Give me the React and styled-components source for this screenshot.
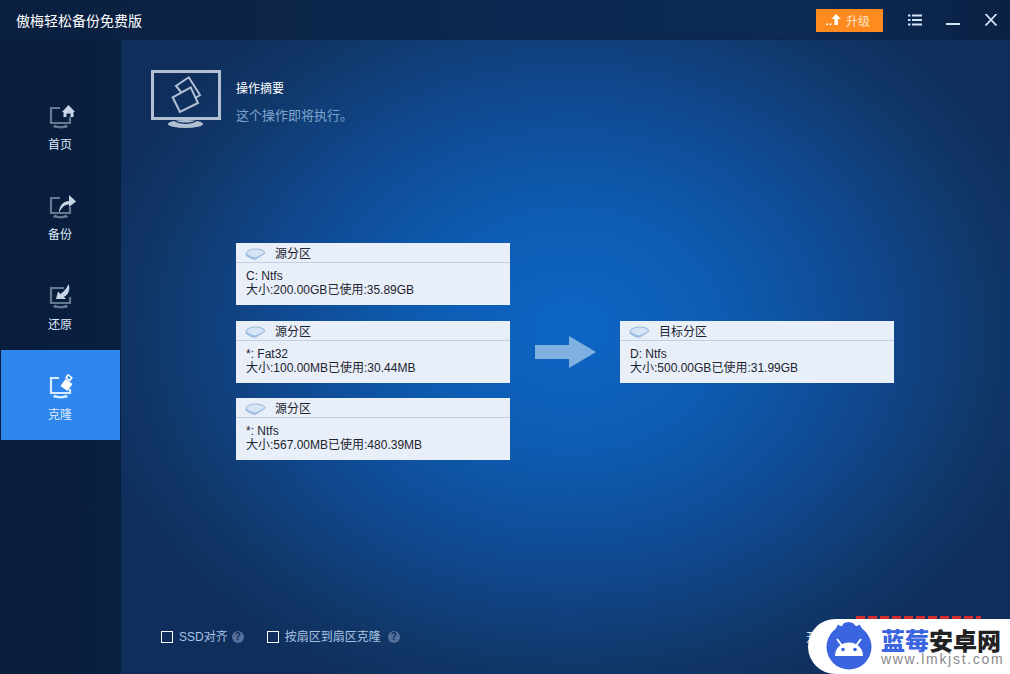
import styled, { createGlobalStyle } from "styled-components"

const cjk = `"Liberation Sans", "Noto Sans CJK SC", sans-serif`

const Monitor = ({ stroke, d }) => (
  <>
    <path d={d} fill="none" stroke={stroke} strokeWidth="2.2" />
    <path d="M6 20.5 C9 22.5 14 22.5 17 20.5 L19 22.5 C19 25 4 25 4 22.5 Z" fill={stroke} />
  </>
)

const HomeIcon = () => (
  <svg width="30" height="28" viewBox="0 0 30 28">
    <Monitor stroke="#66788f" d="M11 4 H2 V19 H21 V13" />
    <path d="M13 8 L19.5 1 L26 8 H24.5 V13 H21.5 V9.5 H17.5 V13 H14.5 V8 Z" fill="#c9d6e8" />
  </svg>
)

const BackupIcon = () => (
  <svg width="30" height="28" viewBox="0 0 30 28">
    <Monitor stroke="#66788f" d="M11 4 H2 V19 H21 V13" />
    <path d="M10 19 C10 11 15 7 20 7 V1 L27 7.5 L20 13 V10.5 C16 10.5 12.5 13 10 19 Z" fill="#c9d6e8" />
  </svg>
)

const RestoreIcon = () => (
  <svg width="30" height="28" viewBox="0 0 30 28">
    <Monitor stroke="#66788f" d="M15 4 H2 V19 H21 V13" />
    <path d="M7 15 L9 7.5 L11.5 10 C15 7.5 18 4 19.5 0 C21.5 5 20 10 15 13 L17 15 Z" fill="#c9d6e8" />
  </svg>
)

const CloneIcon = () => (
  <svg width="30" height="28" viewBox="0 0 30 28">
    <Monitor stroke="#d5ebff" d="M10 4 H2 V19 H21 V15" />
    <path d="M19 0.8 L22.8 3.6 L20.8 6.6 L17 3.8 Z" fill="none" stroke="#fff" strokeWidth="1.5" />
    <path d="M16.5 5 L23.5 10 L18.5 17 L11.5 12 Z" fill="#fff" />
  </svg>
)

const navItems = [
  { label: "首页", Icon: HomeIcon },
  { label: "备份", Icon: BackupIcon },
  { label: "还原", Icon: RestoreIcon },
  { label: "克隆", Icon: CloneIcon, active: true },
]

const sources = [
  { name: "C: Ntfs", size: "大小:200.00GB已使用:35.89GB" },
  { name: "*: Fat32", size: "大小:100.00MB已使用:30.44MB" },
  { name: "*: Ntfs", size: "大小:567.00MB已使用:480.39MB" },
]

const DriveIcon = () => (
  <svg width="21" height="13" viewBox="0 0 21 13">
    <path d="M0.5 5 C3 1 8 0.5 11 0.5 C15 0.5 19 2 20.5 4.5 C20.5 6 15 9 10 12 C7 11.5 1 9 0.5 7 Z" fill="#9fbde0" />
    <path d="M1.5 5 C4 2 8 1.5 11 1.5 C14.5 1.5 18 3 19.5 4.5 C16 7 13 8.5 10 9.5 C6 8.5 3 7 1.5 5 Z" fill="#d6e5f5" />
  </svg>
)

const PartitionCard = ({ title, name, size }) => (
  <Card>
    <CardHead>
      <DriveIcon />
      <span>{title}</span>
    </CardHead>
    <CardBody>
      <div>{name}</div>
      <div>{size}</div>
    </CardBody>
  </Card>
)

const App = () => (
  <Page>
    <GlobalStyle />
    <TitleBar>
      <AppTitle>傲梅轻松备份免费版</AppTitle>
      <UpgradeButton>
        <svg width="17" height="12" viewBox="0 0 17 12">
          <path d="M10 0 L15 5 H12 V11 H8.5 V5 H5.5 Z M0 9.5 H2 V11 H0 Z M3.5 9.5 H5.5 V11 H3.5 Z" fill="#fff" />
        </svg>
        升级
      </UpgradeButton>
      <WindowButtons>
        <svg width="14" height="12" viewBox="0 0 14 12">
          <path d="M0 0.5 H2.5 V2.5 H0 Z M4 0.5 H14 V2.5 H4 Z M0 5 H2.5 V7 H0 Z M4 5 H14 V7 H4 Z M0 9.5 H2.5 V11.5 H0 Z M4 9.5 H14 V11.5 H4 Z" fill="#d6e4f7" />
        </svg>
        <svg width="14" height="12" viewBox="0 0 14 12">
          <path d="M0 9 H14 V11 H0 Z" fill="#d6e4f7" />
        </svg>
        <svg width="14" height="12" viewBox="0 0 14 12">
          <path d="M1.5 0 L12.5 11.5 M12.5 0 L1.5 11.5" stroke="#d6e4f7" strokeWidth="1.8" fill="none" />
        </svg>
      </WindowButtons>
    </TitleBar>
    <Body>
      <Sidebar>
        {navItems.map(({ label, Icon, active }) => (
          <NavItem key={label} $active={active}>
            <Icon />
            <span>{label}</span>
          </NavItem>
        ))}
      </Sidebar>
      <Main>
        <Summary>
          <svg width="70" height="60" viewBox="0 0 70 60">
            <rect x="1.5" y="1.5" width="67" height="47" fill="none" stroke="#b3c0d3" strokeWidth="3" />
            <ellipse cx="34.5" cy="54" rx="17.5" ry="4" fill="#b3c0d3" />
            <path d="M24 51 C29 54 40 54 45 51" fill="none" stroke="#143765" strokeWidth="1.4" />
            <path d="M30 22 L25 16 L37.7 7.3 L49 25 L44.5 28" fill="none" stroke="#b3c0d3" strokeWidth="2" />
            <path d="M21.7 27.3 L39.7 17.3 L47 33 L29 42 Z" fill="none" stroke="#b3c0d3" strokeWidth="2" />
          </svg>
          <SummaryText>
            <SummaryTitle>操作摘要</SummaryTitle>
            <SummaryHint>这个操作即将执行。</SummaryHint>
          </SummaryText>
        </Summary>
        <Diagram>
          <CardColumn>
            {sources.map((s) => (
              <PartitionCard key={s.size} title="源分区" name={s.name} size={s.size} />
            ))}
          </CardColumn>
          <Arrow width="61" height="32" viewBox="0 0 61 32">
            <path d="M0 9 H34 V0 L61 16 L34 32 V23 H0 Z" fill="#7fb0e2" />
          </Arrow>
          <PartitionCard title="目标分区" name="D: Ntfs" size="大小:500.00GB已使用:31.99GB" />
        </Diagram>
        <Options>
          <Check />
          <OptionLabel>SSD对齐</OptionLabel>
          <Help $space={4}>?</Help>
          <Check $gap />
          <OptionLabel>按扇区到扇区克隆</OptionLabel>
          <Help $space={7}>?</Help>
          <NextLabel>开始克隆</NextLabel>
        </Options>
      </Main>
    </Body>
    <RedDash />
    <Watermark>
      <LogoMark width="50" height="48" viewBox="0 0 50 48">
        <path d="M11 8 L14 2.5 L17.5 5 L20 1 L24.5 0 L29 1 L32 5 L35.5 2.5 L39 8 Z" fill="#3a64e0" />
        <circle cx="25" cy="25" r="22.5" fill="#3a64e0" />
        <path d="M11 34 C11 26 17 20.5 25 20.5 C33 20.5 39 26 39 34 Z" fill="#fff" />
        <path d="M13 17 L17.5 23 M37 17 L32.5 23" stroke="#fff" strokeWidth="2" />
        <circle cx="19" cy="27.5" r="1.8" fill="#3a64e0" />
        <circle cx="31" cy="27.5" r="1.8" fill="#3a64e0" />
      </LogoMark>
      <Brand>
        <BrandName>
          <b>蓝莓</b>安卓网
        </BrandName>
        <BrandUrl>www.lmkjst.com</BrandUrl>
      </Brand>
    </Watermark>
  </Page>
)

export default App

const GlobalStyle = createGlobalStyle`
  html, body {
    margin: 0;
    padding: 0;
    background: #0a1f3f;
    overflow: hidden;
  }
`

const Page = styled.div`
  position: relative;
  width: 1010px;
  height: 674px;
  display: flex;
  flex-direction: column;
  overflow: hidden;
  font-family: ${cjk};
  font-size: 12px;
`

const TitleBar = styled.div`
  height: 40px;
  flex: none;
  display: flex;
  align-items: center;
  padding: 0 12px 0 16px;
  box-sizing: border-box;
  background: linear-gradient(90deg, #0a1f3e 0%, #0c2850 50%, #0c2a54 80%, #0a2144 100%);
  border-bottom: 1px solid #0b2548;
`

const AppTitle = styled.div`
  flex: 1;
  font-size: 14px;
  color: #fff;
`

const UpgradeButton = styled.div`
  width: 67px;
  height: 23px;
  margin-top: 1px;
  padding-right: 3px;
  box-sizing: border-box;
  display: flex;
  align-items: center;
  justify-content: center;
  gap: 3px;
  background: #ff8a20;
  color: #ffe6c8;
  font-size: 12px;
`

const WindowButtons = styled.div`
  display: flex;
  gap: 24px;
  margin-left: 25px;
`

const Body = styled.div`
  flex: 1;
  display: flex;
  min-height: 0;
`

const Sidebar = styled.div`
  width: 121px;
  flex: none;
  padding: 40px 1px 0 1px;
  box-sizing: border-box;
  background: linear-gradient(90deg, #091c3a 0%, #0a2041 100%);
`

const NavItem = styled.div`
  height: 90px;
  display: flex;
  flex-direction: column;
  align-items: center;
  padding: 24px 1px 0 0;
  box-sizing: border-box;
  gap: 3px;
  color: #dfeafa;
  background: ${(p) => (p.$active ? "#2f87ee" : "transparent")};
  svg {
    margin-left: 7px;
  }
`

const Main = styled.div`
  flex: 1;
  display: flex;
  flex-direction: column;
  padding: 30px 0 29px 30px;
  box-sizing: border-box;
  background: radial-gradient(ellipse 500px 400px at 450px 290px, #0d66c5 0%, #0d5cb2 30%, #10488f 60%, #103768 85%, #0f2e5c 100%);
  background-color: #0f2e5c;
`

const Summary = styled.div`
  display: flex;
  gap: 15px;
  height: 60px;
`

const SummaryText = styled.div`
  padding-top: 11px;
  display: flex;
  flex-direction: column;
  gap: 11px;
`

const SummaryTitle = styled.div`
  color: #fff;
  font-size: 12px;
  line-height: 16px;
`

const SummaryHint = styled.div`
  color: #7fa5cd;
  font-size: 13px;
  line-height: 16px;
`

const Diagram = styled.div`
  margin: 113px 0 0 85px;
  display: flex;
  align-items: center;
  gap: 24px;
`

const Arrow = styled.svg`
  margin-left: 1px;
`

const CardColumn = styled.div`
  display: flex;
  flex-direction: column;
  gap: 15.5px;
`

const Card = styled.div`
  width: 274px;
  height: 62px;
  background: #e8eff9;
  color: #1d2430;
`

const CardHead = styled.div`
  height: 20px;
  display: flex;
  align-items: center;
  gap: 9px;
  padding: 4px 0 0 9px;
  border-bottom: 1px solid #c3cfe0;
  box-sizing: border-box;
  span {
    line-height: 14px;
    padding-bottom: 1px;
  }
`

const CardBody = styled.div`
  padding: 6px 0 0 10px;
  line-height: 14px;
`

const Options = styled.div`
  margin-top: auto;
  display: flex;
  align-items: center;
  padding-left: 10px;
  color: #a9c3e2;
`

const Check = styled.div`
  width: 12px;
  height: 12px;
  box-sizing: border-box;
  border: 1px solid #fff;
  margin-left: ${(p) => (p.$gap ? "23px" : "0")};
  margin-right: 6px;
`

const OptionLabel = styled.span`
  line-height: 14px;
`

const Help = styled.span`
  width: 12px;
  height: 12px;
  margin-left: ${(p) => p.$space}px;
  border-radius: 50%;
  background: #54709a;
  color: #0f2f60;
  font-size: 10px;
  font-weight: bold;
  line-height: 12px;
  text-align: center;
`

const NextLabel = styled.span`
  margin-left: auto;
  margin-right: 156px;
  color: #dfeafa;
`

const RedDash = styled.div`
  position: absolute;
  left: 856px;
  top: 616px;
  width: 125px;
  height: 3px;
  background: repeating-linear-gradient(90deg, #d62b2b 0 9px, transparent 9px 12px);
`

const Watermark = styled.div`
  position: absolute;
  left: 808px;
  top: 619px;
  width: 202px;
  height: 55px;
  display: flex;
  align-items: flex-end;
  padding-left: 16px;
  box-sizing: border-box;
  background: #fff;
  border-radius: 28px 0 0 28px;
`

const LogoMark = styled.svg`
  align-self: flex-start;
  margin-top: 3px;
  flex: none;
`

const Brand = styled.div`
  margin-left: 7px;
  padding-bottom: 8px;
  display: flex;
  flex-direction: column;
`

const BrandName = styled.div`
  font-family: "Noto Sans CJK SC", sans-serif;
  font-size: 24px;
  font-weight: 900;
  line-height: 24px;
  color: #222;
  b {
    color: #3a64e0;
    font-weight: 900;
  }
`

const BrandUrl = styled.div`
  font-family: "Liberation Sans", sans-serif;
  font-size: 14px;
  line-height: 14px;
  letter-spacing: 1.7px;
  color: #8a8a8a;
`
